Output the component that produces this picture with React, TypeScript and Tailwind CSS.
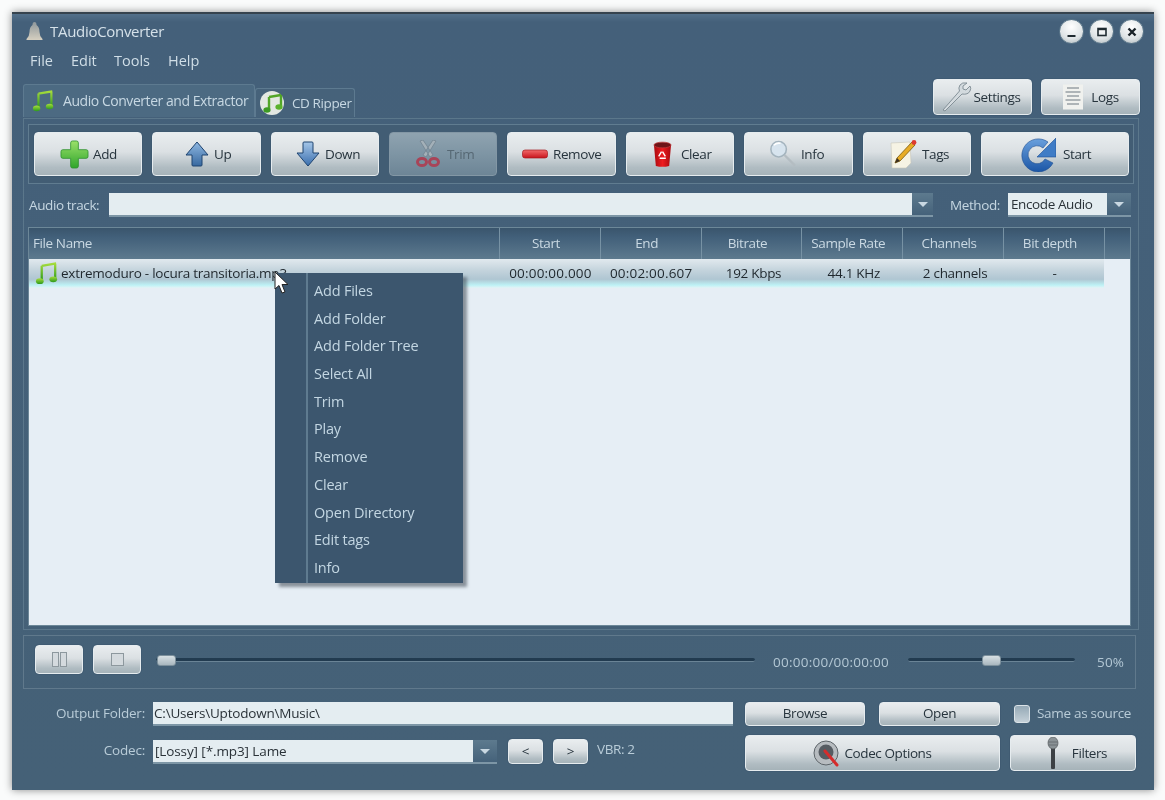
import React from "react";

const btn = "flex items-center justify-center rounded-[4px] border border-[#e6ecef] bg-[linear-gradient(180deg,#e9edef_0%,#dbe0e3_45%,#b0bcc2_82%,#a6b3b9_100%)] text-[#27343d] shadow-[0_0_0_1px_#35506a55]";

function Note({ size = 26, id }: { size?: number; id: string }) {
  return (
    <svg width={size} height={size} viewBox="0 0 26 26">
      <defs>
        <linearGradient id={id} x1="0" y1="0" x2="0" y2="1">
          <stop offset="0" stopColor="#a5dc3c" />
          <stop offset="1" stopColor="#2c9a1c" />
        </linearGradient>
      </defs>
      <path d="M7 5 L7 20 M7 5 L22 2.5 M21 3 L21 18" stroke={`url(#${id})`} strokeWidth="2.4" fill="none" />
      <ellipse cx="5" cy="21" rx="4" ry="3" fill={`url(#${id})`} />
      <ellipse cx="19" cy="19" rx="4" ry="3" fill={`url(#${id})`} />
    </svg>
  );
}

function Plus() {
  return (
    <svg width="29" height="29" viewBox="0 0 30 30">
      <defs>
        <linearGradient id="plusg" x1="0" y1="0" x2="0" y2="1">
          <stop offset="0" stopColor="#9be06a" />
          <stop offset="1" stopColor="#2fa52b" />
        </linearGradient>
      </defs>
      <path d="M11 3 Q11 1 13 1 L17 1 Q19 1 19 3 L19 10 L27 10 Q29 10 29 12 L29 17 Q29 19 27 19 L19 19 L19 27 Q19 29 17 29 L13 29 Q11 29 11 27 L11 19 L3 19 Q1 19 1 17 L1 12 Q1 10 3 10 L11 10 Z" fill="url(#plusg)" stroke="#2a8f2a" strokeWidth="0.8" />
    </svg>
  );
}

function Arrow({ down }: { down?: boolean }) {
  const id = down ? "arrd" : "arru";
  return (
    <svg width="24" height="26" viewBox="0 0 24 26" style={{ transform: down ? "scaleY(-1)" : undefined }}>
      <defs>
        <linearGradient id={id} x1="0" y1="0" x2="0" y2="1">
          <stop offset="0" stopColor={down ? "#3b6fae" : "#8fb8e2"} />
          <stop offset="1" stopColor={down ? "#a5c6e8" : "#37689f"} />
        </linearGradient>
      </defs>
      <path d="M12 1 L23 14 L17 14 L17 24 Q17 25 16 25 L8 25 Q7 25 7 24 L7 14 L1 14 Z" fill={`url(#${id})`} stroke="#1f4470" strokeWidth="1" strokeLinejoin="round" />
    </svg>
  );
}

function Scissors() {
  return (
    <svg width="24" height="28" viewBox="0 0 24 28">
      <path d="M4 1 L14 17 L17 15 L7 0 Z M20 1 L10 17 L7 15 L17 0 Z" fill="#a3b0b8" stroke="#6f808c" strokeWidth="0.7" />
      <ellipse cx="6" cy="22" rx="4.5" ry="3.5" fill="none" stroke="#a84458" strokeWidth="3" />
      <ellipse cx="18" cy="22" rx="4.5" ry="3.5" fill="none" stroke="#a84458" strokeWidth="3" />
    </svg>
  );
}

function Minus() {
  return (
    <svg width="26" height="10" viewBox="0 0 26 10">
      <defs>
        <linearGradient id="ming" x1="0" y1="0" x2="0" y2="1">
          <stop offset="0" stopColor="#f26a6a" />
          <stop offset="1" stopColor="#c8141c" />
        </linearGradient>
      </defs>
      <rect x="0.5" y="1" width="25" height="8" rx="2.5" fill="url(#ming)" stroke="#a51a20" strokeWidth="0.7" />
    </svg>
  );
}

function Trash() {
  return (
    <svg width="19" height="27" viewBox="0 0 20 28">
      <defs>
        <linearGradient id="trg" x1="0" y1="0" x2="1" y2="0">
          <stop offset="0" stopColor="#a80a10" />
          <stop offset="0.5" stopColor="#ee1c20" />
          <stop offset="1" stopColor="#a80a10" />
        </linearGradient>
      </defs>
      <path d="M1 4 L3 26 Q10 28 17 26 L19 4 Z" fill="url(#trg)" />
      <ellipse cx="10" cy="4" rx="9" ry="3" fill="#6e1518" stroke="#bd3a3a" strokeWidth="0.8" />
      <path d="M10 11 L13 16 M13.5 18 L7 18 M6 16 L9 11" stroke="#fff" strokeWidth="1.5" fill="none" />
    </svg>
  );
}

function Magnifier() {
  return (
    <svg width="29" height="30" viewBox="0 0 30 30">
      <circle cx="11" cy="10" r="8" fill="#d7e4ee" stroke="#a4b4be" strokeWidth="1.6" />
      <path d="M6 6 Q9 3 13 4" stroke="#fff" strokeWidth="1.6" fill="none" />
      <path d="M17 16 L28 27" stroke="#b4bdc2" strokeWidth="2.4" />
    </svg>
  );
}

function Tags() {
  return (
    <svg width="28" height="30" viewBox="0 0 28 30">
      <path d="M2 4 L21 3 L22 24 L17 29 L3 29 Z" fill="#f6f3e4" stroke="#c8c6ba" strokeWidth="0.6" />
      <path d="M6 24 L8 19 L23 3 L26 6 L11 22 Z" fill="#e8ac26" stroke="#78590e" strokeWidth="0.8" />
      <path d="M6 24 L8 19 L11 22 Z" fill="#3c3020" />
      <circle cx="25" cy="3.5" r="2.4" fill="#dd3a30" />
    </svg>
  );
}

function Refresh() {
  return (
    <svg width="36" height="36" viewBox="0 0 36 36">
      <defs>
        <linearGradient id="rfg" x1="0" y1="0" x2="0" y2="1">
          <stop offset="0" stopColor="#6aa0dd" />
          <stop offset="1" stopColor="#1b56a6" />
        </linearGradient>
      </defs>
      <path d="M28 6 A16.5 16.5 0 1 0 33 27 L25 23 A9 9 0 1 1 23 12 Z" fill="url(#rfg)" stroke="#1f4f92" strokeWidth="0.6" />
      <path d="M36 2 L36 21 L17 21 Z" fill="#3f7cc6" stroke="#1f4f92" strokeWidth="0.6" />
    </svg>
  );
}

function Wrench() {
  return (
    <svg width="30" height="30" viewBox="0 0 30 30">
      <path d="M1 28 L3 29 L20 12 Q26 13 28 9 Q29.5 6 28 4 L24 8 L21 7 L21 4 L25 1 Q20 0 18 3 Q16 6 17.5 9 Z" fill="#d3dade" stroke="#7d8a92" strokeWidth="0.9" strokeLinejoin="round" />
    </svg>
  );
}

function Doc() {
  return (
    <svg width="22" height="26" viewBox="0 0 22 26">
      <rect x="1" y="0.5" width="20" height="25" fill="#f0f1ee" />
      <path d="M5 4 H17 M3.5 8 H18.5 M5 12 H17 M3.5 16 H18.5 M5 20 H17" stroke="#6c7880" strokeWidth="1.2" />
    </svg>
  );
}

function Knob() {
  return (
    <svg width="28" height="30" viewBox="0 0 28 30">
      <circle cx="13" cy="15" r="12" fill="#b7bcc0" stroke="#5d6469" strokeWidth="1" />
      <circle cx="13" cy="14" r="7.5" fill="#565c62" />
      <path d="M12 13 L24 27" stroke="#d52c2c" strokeWidth="3" strokeLinecap="round" />
    </svg>
  );
}

function Mic() {
  return (
    <svg width="14" height="32" viewBox="0 0 14 32">
      <rect x="5" y="10" width="4" height="22" rx="1" fill="#3c4044" />
      <ellipse cx="7" cy="6" rx="5" ry="6" fill="#8a9296" stroke="#55595c" strokeWidth="0.7" />
      <path d="M2.5 5 H11.5 M2.5 8 H11.5" stroke="#5a6064" strokeWidth="0.7" />
    </svg>
  );
}

function Bell() {
  return (
    <svg width="17" height="20" viewBox="0 0 16 20">
      <defs>
        <linearGradient id="bellg" x1="0" y1="0" x2="0" y2="1">
          <stop offset="0" stopColor="#8e979b" />
          <stop offset="1" stopColor="#d5cfc0" />
        </linearGradient>
      </defs>
      <path d="M8 0 Q10 0 10 3 Q13 5 13 10 Q13 14 16 17 L16 18 L0 18 L0 17 Q3 14 3 10 Q3 5 6 3 Q6 0 8 0 Z" fill="url(#bellg)" />
    </svg>
  );
}

function Cd() {
  return (
    <svg width="26" height="26" viewBox="0 0 26 26">
      <circle cx="13" cy="13" r="12" fill="#e3e8e2" />
      <path d="M10 7 L10 19 M10 7 L22 5 M22 5 L22 16" stroke="#52a628" strokeWidth="2.4" fill="none" />
      <ellipse cx="8" cy="20" rx="3.6" ry="2.8" fill="#3d9a24" />
      <ellipse cx="20" cy="17" rx="3.6" ry="2.8" fill="#5ab22c" />
    </svg>
  );
}

function Caption({ kind }: { kind: "min" | "max" | "close" }) {
  return (
    <div className="flex h-[25px] w-[25px] items-center justify-center rounded-full border border-[#5f7a8d] bg-[radial-gradient(circle_at_50%_30%,#ffffff,#dfe4e6_60%,#a9b3b8)]">
      <svg width="12" height="12" viewBox="0 0 12 12">
        {kind === "min" && <rect x="1.5" y="9" width="8" height="2" fill="#1f2a30" />}
        {kind === "max" && <rect x="2" y="2.5" width="8" height="7" fill="none" stroke="#1f2a30" strokeWidth="1.6" />}
        {kind === "max" && <rect x="2" y="2" width="8" height="2.2" fill="#1f2a30" />}
        {kind === "close" && <path d="M2.5 2.5 L9.5 9.5 M9.5 2.5 L2.5 9.5" stroke="#1a2228" strokeWidth="2.4" />}
      </svg>
    </div>
  );
}

function ToolBtn({ cls, gap, icon, label }: { cls: string; gap: string; icon: React.ReactNode; label: string }) {
  return (
    <button className={`${btn} ${cls} h-[44px] !justify-start`}>
      <span className="flex items-center justify-center">{icon}</span>
      <span className={gap}>{label}</span>
    </button>
  );
}

function Arrowbox({ w }: { w: string }) {
  return (
    <div className={`${w} flex h-full items-center justify-center bg-[linear-gradient(180deg,#5d7a8e,#45627a)]`}>
      <div className="h-0 w-0 border-x-[5px] border-t-[5px] border-x-transparent border-t-[#c9d8e2]" />
    </div>
  );
}

function Slider({ w, thumbLeft, thumbW }: { w: string; thumbLeft: string; thumbW: string }) {
  return (
    <div className={`${w} relative mt-[4px] h-[12px]`}>
      <div className="mt-[3px] h-[4px] rounded-full border-b border-[#6a8496] bg-[#223b50]" />
      <div className={`absolute top-0 ${thumbLeft} ${thumbW} h-[11px] rounded-[3px] border border-[#7d909c] bg-[linear-gradient(180deg,#d7dfe3,#a9b7bf)]`} />
    </div>
  );
}

const cols: [string, string, string][] = [
  ["Start", "00:00:00.000", "pl-[2px] tracking-[0.2px]"],
  ["End", "00:02:00.607", "pl-[2px] tracking-[0.2px]"],
  ["Bitrate", "192 Kbps", "pl-[5px] tracking-[-0.3px]"],
  ["Sample Rate", "44.1 KHz", "pl-[4px] tracking-[-0.3px]"],
  ["Channels", "2 channels", "pl-[5px] tracking-[-0.3px]"],
  ["Bit depth", "-", "pl-[2px]"],
];

const menu = ["Add Files", "Add Folder", "Add Folder Tree", "Select All", "Trim", "Play", "Remove", "Clear", "Open Directory", "Edit tags", "Info"];

export default function App() {
  return (
    <div className="h-[800px] w-[1165px] overflow-hidden bg-[#fafbfb] pl-[12px] pt-[12px] font-['Open_Sans','Noto_Sans',sans-serif] text-[13.5px] tracking-[-0.4px] blur-[0.35px]">
      <div className="relative h-[778px] w-[1142px] border-t-[2px] border-t-[#36434e] bg-[linear-gradient(180deg,#53708a_0px,#44607a_8px,#456177_100%)] shadow-[0_0_8px_rgba(0,0,0,0.45)]">
        {/* Title bar */}
        <div className="flex h-[34px] items-center pl-[14px] pr-[10px] pt-[1px]">
          <Bell />
          <span className="ml-[7px] text-[15px] tracking-[-0.3px] text-[#d5e1e9]">TAudioConverter</span>
          <div className="ml-auto flex gap-[5px]">
            <Caption kind="min" />
            <Caption kind="max" />
            <Caption kind="close" />
          </div>
        </div>
        {/* Menu */}
        <div className="flex h-[26px] items-center pl-[18px] text-[14.5px] tracking-[0px] text-[#d0dee7]">
          <span className="w-[41px]">File</span>
          <span className="w-[43px]">Edit</span>
          <span className="w-[54px]">Tools</span>
          <span>Help</span>
        </div>
        {/* Tabs + top-right */}
        <div className="flex h-[43px] items-end pl-[11px] pr-[14px]">
          <div className="flex h-[33px] w-[232px] items-center rounded-t-[3px] border border-b-0 border-[#5d7a90] bg-[#4c6a82] pb-[1px] pl-[8px] text-[#c7d8e3]">
            <Note id="tab1" size={24} />
            <span className="ml-[7px] whitespace-nowrap text-[14px] tracking-[-0.45px]">Audio Converter and Extractor</span>
          </div>
          <div className="flex h-[29px] w-[100px] items-center rounded-t-[3px] border border-b-0 border-[#5d7a90] bg-[#46627a] pl-[3px] text-[#c7d8e3]">
            <Cd />
            <span className="ml-[7px] whitespace-nowrap">CD Ripper</span>
          </div>
          <div className="ml-auto flex items-end gap-[9px] pb-[2px]">
            <button className={`${btn} h-[36px] w-[99px]`}><Wrench /><span className="ml-[2px] pr-[3px]">Settings</span></button>
            <button className={`${btn} h-[36px] w-[99px]`}><Doc /><span className="ml-[7px]">Logs</span></button>
          </div>
        </div>
        {/* Tab panel */}
        <div className="ml-[11px] mt-[1px] w-[1116px] border border-[#5b778b] pb-[3px]">
          {/* Toolbar */}
          <div className="ml-[4px] mt-[5px] flex h-[60px] w-[1106px] items-center gap-[10px] border border-[#607c90] bg-[#425d74] pl-[5px]">
            <ToolBtn cls="w-[108px] pl-[25px]" gap="ml-[4px]" icon={<Plus />} label="Add" />
            <ToolBtn cls="w-[109px] pl-[32px]" gap="ml-[5px]" icon={<Arrow />} label="Up" />
            <ToolBtn cls="w-[108px] pl-[24px]" gap="ml-[5px]" icon={<Arrow down />} label="Down" />
            <button className="flex h-[44px] w-[108px] items-center rounded-[4px] border border-[#8397a5] bg-[linear-gradient(180deg,#8fa3b0,#7e95a4_50%,#6d8596)] pl-[26px] text-[#566874]">
              <Scissors />
              <span className="ml-[7px]">Trim</span>
            </button>
            <ToolBtn cls="w-[109px] pl-[14px]" gap="ml-[5px]" icon={<Minus />} label="Remove" />
            <ToolBtn cls="w-[108px] pl-[26px]" gap="ml-[9px]" icon={<Trash />} label="Clear" />
            <ToolBtn cls="w-[109px] pl-[23px]" gap="ml-[4px]" icon={<Magnifier />} label="Info" />
            <ToolBtn cls="w-[108px] pl-[25px]" gap="ml-[5px]" icon={<Tags />} label="Tags" />
            <ToolBtn cls="w-[148px] pl-[38px]" gap="ml-[7px]" icon={<Refresh />} label="Start" />
          </div>
          {/* Audio track */}
          <div className="mt-[9px] flex h-[24px] items-center pl-[5px] text-[#c5d6e1]">
            <span className="w-[80px]">Audio track:</span>
            <div className="flex h-[24px] w-[824px] border-b-[2px] border-[#7d96a6] bg-[#e4edf1]">
              <div className="flex-1" />
              <Arrowbox w="w-[21px]" />
            </div>
            <span className="ml-[17px] w-[58px]">Method:</span>
            <div className="flex h-[24px] w-[123px] border-b-[2px] border-[#7d96a6] bg-[#e4edf1] text-[#2a3238]">
              <span className="flex-1 pl-[3px] leading-[22px]">Encode Audio</span>
              <Arrowbox w="w-[24px]" />
            </div>
          </div>
          {/* Table */}
          <div className="relative ml-[4px] mt-[10px] h-[399px] w-[1103px] border border-[#6c8798] bg-[#e6eef5]">
            <div className="flex h-[31px] items-center bg-[linear-gradient(180deg,#3a556c,#42607a_30%,#5d7a8e)] text-[#cad9e3]">
              <div className="w-[470px] pl-[4px]">File Name</div>
              {cols.map(([h]) => (
                <div key={h} className="h-full w-[100.8px] border-l border-[#7792a4] pr-[8px] text-center leading-[31px]">{h}</div>
              ))}
              <div className="h-full flex-1 border-l border-[#7792a4]" />
            </div>
            <div className="flex h-[29px] w-[1075px] items-center bg-[linear-gradient(180deg,#e1e9ee_0%,#c3d3dc_40%,#afc6d2_70%,#bdf1f5_90%,#e4f3f6_100%)] text-[#1f272d]">
              <div className="flex w-[470px] items-center pl-[6px] tracking-[-0.25px]">
                <Note id="row1" size={25} />
                <span className="ml-[1px] whitespace-nowrap">extremoduro - locura transitoria.mp3</span>
              </div>
              {cols.map(([h, v, c]) => (
                <div key={h} className={`w-[100.8px] whitespace-nowrap text-center ${c}`}>{v}</div>
              ))}
            </div>
            {/* Context menu */}
            <div className="absolute left-[246px] top-[45px] h-[310px] w-[188px] bg-[#3c566e] pl-[39px] pt-[4px] text-[14.5px] tracking-[-0.2px] text-[#c3d6e2] shadow-[4px_4px_3px_rgba(60,70,80,0.55)]">
              <div className="absolute bottom-0 left-[31px] top-0 w-[2px] bg-[#5f7b90]" />
              {menu.map((m) => (
                <div key={m} className="h-[27.7px] leading-[27px]">{m}</div>
              ))}
            </div>
            <svg className="absolute left-[245px] top-[43px]" width="16" height="24" viewBox="0 0 16 24">
              <path d="M1 1 L1 18 L5 14.5 L8 22 L11 21 L8 13.5 L14 13.5 Z" fill="#fff" stroke="#222" strokeWidth="1" />
            </svg>
          </div>
        </div>
        {/* Player */}
        <div className="ml-[11px] mt-[5px] flex h-[54px] w-[1113px] items-center border border-[#60798c] pb-[6px] pl-[11px] text-[#b3c7d4]">
          <button className={`${btn} h-[29px] w-[48px]`}>
            <span className="mr-[1px] h-[15px] w-[7px] border border-[#8d989e] bg-[#d4dade]" />
            <span className="h-[15px] w-[7px] border border-[#8d989e] bg-[#d4dade]" />
          </button>
          <button className={`${btn} ml-[10px] h-[29px] w-[48px]`}>
            <span className="h-[13px] w-[13px] border border-[#8d989e] bg-[#d4dade]" />
          </button>
          <Slider w="ml-[15px] w-[599px]" thumbLeft="left-[1px]" thumbW="w-[19px]" />
          <span className="ml-[18px] mt-[6px] w-[135px] whitespace-nowrap tracking-[0.25px]">00:00:00/00:00:00</span>
          <Slider w="w-[167px]" thumbLeft="left-[74px]" thumbW="w-[19px]" />
          <span className="ml-[22px] mt-[6px] tracking-[0.2px]">50%</span>
        </div>
        {/* Output folder */}
        <div className="mt-[12px] flex h-[25px] items-center text-[#b9ccd8]">
          <span className="w-[133px] text-right tracking-[-0.2px]">Output Folder:</span>
          <div className="ml-[8px] h-[24px] w-[580px] border-b-[2px] border-[#7d96a6] bg-[#e4edf1] pl-[1px] leading-[22px] tracking-[-0.2px] text-[#2a3238]">C:\Users\Uptodown\Music\</div>
          <button className={`${btn} ml-[12px] h-[24px] w-[120px]`}>Browse</button>
          <button className={`${btn} ml-[14px] h-[24px] w-[121px]`}>Open</button>
          <span className="ml-[14px] h-[18px] w-[16px] rounded-[3px] border border-[#dbe3e8] bg-[linear-gradient(180deg,#95a9b6,#c4d0d8)]" />
          <span className="ml-[7px] whitespace-nowrap tracking-[-0.3px]">Same as source</span>
        </div>
        {/* Codec */}
        <div className="mt-[9px] flex h-[36px] items-start text-[#b9ccd8]">
          <span className="mt-[5px] w-[133px] text-right tracking-[-0.2px]">Codec:</span>
          <div className="ml-[8px] mt-[5px] flex h-[24px] w-[344px] border-b-[2px] border-[#7d96a6] bg-[#e4edf1] text-[#2a3238]">
            <span className="flex-1 pl-[2px] leading-[22px] tracking-[-0.1px]">[Lossy] [*.mp3] Lame</span>
            <Arrowbox w="w-[24px]" />
          </div>
          <button className={`${btn} ml-[11px] mt-[4px] h-[25px] w-[35px]`}>&lt;</button>
          <button className={`${btn} ml-[10px] mt-[4px] h-[25px] w-[35px]`}>&gt;</button>
          <span className="ml-[9px] mt-[4px] w-[148px] whitespace-nowrap">VBR: 2</span>
          <button className={`${btn} h-[36px] w-[255px]`}>
            <Knob /><span className="ml-[3px]">Codec Options</span>
          </button>
          <button className={`${btn} ml-[10px] h-[36px] w-[126px] pl-[7px]`}>
            <Mic /><span className="ml-[12px]">Filters</span>
          </button>
        </div>
      </div>
    </div>
  );
}
